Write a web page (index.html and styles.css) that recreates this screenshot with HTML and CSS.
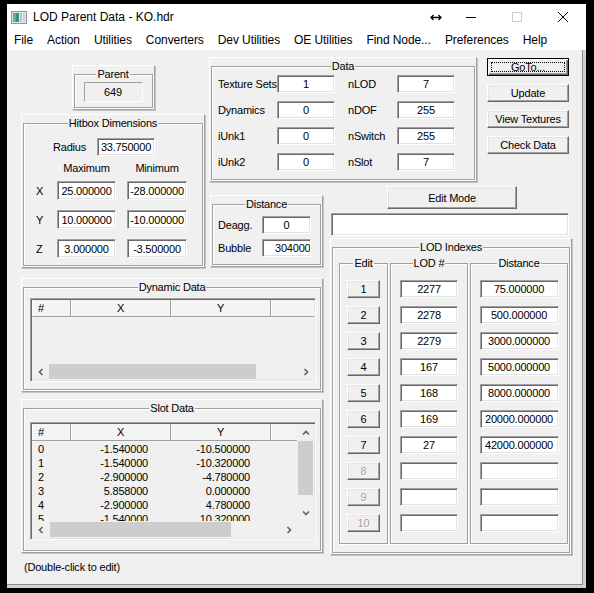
FILE: index.html
```html
<!DOCTYPE html>
<html lang="en">
<head>
    <meta charset="UTF-8">
    <meta name="viewport" content="width=device-width, initial-scale=1.0">
    <title>LOD Parent Data - KO.hdr</title>
    <link rel="stylesheet" href="styles.css">
</head>
<body>
    <div class="window">
        <div class="titlebar">
            <svg class="app-icon" width="16" height="13" viewBox="0 0 16 13">
                <rect x="0.5" y="0.5" width="15" height="12" fill="#e4e8ea" stroke="#8a969c"/>
                <rect x="2" y="2" width="6" height="9" fill="#3c8f7e"/>
                <rect x="2" y="2" width="3" height="9" fill="#5fae9a"/>
                <rect x="9" y="2" width="2" height="9" fill="#b9c3c8"/>
                <rect x="12" y="2" width="2" height="9" fill="#ccd4d8"/>
            </svg>
            <span class="title">LOD Parent Data - KO.hdr</span>
            <div class="caption">
                <span class="cap-extra">
                    <svg width="12" height="7" viewBox="0 0 12 7"><path d="M1 3.5h10M3.5 1L1 3.5 3.5 6M8.5 1L11 3.5 8.5 6" fill="none" stroke="#000" stroke-width="1.3"/></svg>
                </span>
                <span class="cap-btn">
                    <svg width="10" height="10" viewBox="0 0 10 10"><path d="M0 5.5h10" stroke="#000" stroke-width="1"/></svg>
                </span>
                <span class="cap-btn">
                    <svg width="10" height="10" viewBox="0 0 10 10"><rect x="0.5" y="0.5" width="9" height="9" fill="none" stroke="#cccccc"/></svg>
                </span>
                <span class="cap-btn">
                    <svg width="10" height="10" viewBox="0 0 10 10"><path d="M0 0L10 10M10 0L0 10" stroke="#000" stroke-width="1"/></svg>
                </span>
            </div>
        </div>

        <div class="menubar">
            <span>File</span>
            <span>Action</span>
            <span>Utilities</span>
            <span>Converters</span>
            <span>Dev Utilities</span>
            <span>OE Utilities</span>
            <span>Find Node...</span>
            <span>Preferences</span>
            <span>Help</span>
        </div>

        <div class="client">
            <div class="main">
                <div class="left-col">
                    <div class="top">
                        <div class="col-a">
                            <div class="panel parent-panel">
                                <fieldset class="group">
                                    <legend>Parent</legend>
                                    <div class="ro-box">649</div>
                                </fieldset>
                            </div>

                            <div class="panel hitbox-panel">
                                <fieldset class="group">
                                    <legend>Hitbox Dimensions</legend>
                                    <div class="radius-row">
                                        <span class="radius-label">Radius</span>
                                        <div class="field radius-field">33.750000</div>
                                    </div>
                                    <div class="dims-head">
                                        <span class="max-head">Maximum</span>
                                        <span class="min-head">Minimum</span>
                                    </div>
                                    <div class="dims">
                                        <span class="axis">X</span>
                                        <div class="field max-field">25.000000</div>
                                        <div class="field min-field">-28.000000</div>
                                        <span class="axis">Y</span>
                                        <div class="field max-field">10.000000</div>
                                        <div class="field min-field">-10.000000</div>
                                        <span class="axis">Z</span>
                                        <div class="field max-field">3.000000</div>
                                        <div class="field min-field">-3.500000</div>
                                    </div>
                                </fieldset>
                            </div>
                        </div>

                        <div class="col-b">
                            <div class="panel data-panel">
                                <fieldset class="group">
                                    <legend>Data</legend>
                                    <div class="data-grid">
                                        <span class="lbl">Texture Sets</span>
                                        <div class="field">1</div>
                                        <span class="lbl lbl2">nLOD</span>
                                        <div class="field">7</div>

                                        <span class="lbl">Dynamics</span>
                                        <div class="field">0</div>
                                        <span class="lbl lbl2">nDOF</span>
                                        <div class="field">255</div>

                                        <span class="lbl">iUnk1</span>
                                        <div class="field">0</div>
                                        <span class="lbl lbl2">nSwitch</span>
                                        <div class="field">255</div>

                                        <span class="lbl">iUnk2</span>
                                        <div class="field">0</div>
                                        <span class="lbl lbl2">nSlot</span>
                                        <div class="field">7</div>
                                    </div>
                                </fieldset>
                            </div>

                            <div class="panel distance-panel">
                                <fieldset class="group">
                                    <legend>Distance</legend>
                                    <div class="dist-grid">
                                        <span class="lbl">Deagg.</span>
                                        <div class="field">0</div>
                                        <span class="lbl">Bubble</span>
                                        <div class="field clipped">304000</div>
                                    </div>
                                </fieldset>
                            </div>
                        </div>
                    </div>

                    <div class="panel dynamic-panel">
                        <fieldset class="group">
                            <legend>Dynamic Data</legend>
                            <div class="listview dyn-list">
                                <div class="lv-head">
                                    <span class="hc hc-num">#</span>
                                    <span class="hc hc-val">X</span>
                                    <span class="hc hc-val">Y</span>
                                    <span class="hc hc-rest"></span>
                                </div>
                                <div class="lv-body"></div>
                                <div class="hscroll">
                                    <span class="arrow"><svg width="8" height="8" viewBox="0 0 8 8"><path d="M5.5 1L2.5 4l3 3" fill="none" stroke="#606060" stroke-width="1.6"/></svg></span>
                                    <div class="track"><div class="thumb dyn-thumb"></div></div>
                                    <span class="arrow"><svg width="8" height="8" viewBox="0 0 8 8"><path d="M2.5 1l3 3-3 3" fill="none" stroke="#606060" stroke-width="1.6"/></svg></span>
                                </div>
                            </div>
                        </fieldset>
                    </div>

                    <div class="panel slot-panel">
                        <fieldset class="group">
                            <legend>Slot Data</legend>
                            <div class="listview slot-list">
                                <div class="lv-main">
                                    <div class="lv-content">
                                        <div class="lv-head">
                                            <span class="hc hc-num">#</span>
                                            <span class="hc hc-val">X</span>
                                            <span class="hc hc-val">Y</span>
                                            <span class="hc hc-rest"></span>
                                        </div>
                                        <div class="lv-body">
                                            <div class="lv-row"><span class="c-num">0</span><span class="c-x">-1.540000</span><span class="c-y">-10.500000</span></div>
                                            <div class="lv-row"><span class="c-num">1</span><span class="c-x">-1.540000</span><span class="c-y">-10.320000</span></div>
                                            <div class="lv-row"><span class="c-num">2</span><span class="c-x">-2.900000</span><span class="c-y">-4.780000</span></div>
                                            <div class="lv-row"><span class="c-num">3</span><span class="c-x">5.858000</span><span class="c-y">0.000000</span></div>
                                            <div class="lv-row"><span class="c-num">4</span><span class="c-x">-2.900000</span><span class="c-y">4.780000</span></div>
                                            <div class="lv-row"><span class="c-num">5</span><span class="c-x">-1.540000</span><span class="c-y">10.320000</span></div>
                                        </div>
                                    </div>
                                    <div class="vscroll">
                                        <span class="arrow"><svg width="8" height="8" viewBox="0 0 8 8"><path d="M1 5.5l3-3 3 3" fill="none" stroke="#606060" stroke-width="1.6"/></svg></span>
                                        <div class="track"><div class="thumb slot-vthumb"></div></div>
                                        <span class="arrow"><svg width="8" height="8" viewBox="0 0 8 8"><path d="M1 2.5l3 3 3-3" fill="none" stroke="#606060" stroke-width="1.6"/></svg></span>
                                    </div>
                                </div>
                                <div class="lv-bottom">
                                    <div class="hscroll">
                                        <span class="arrow"><svg width="8" height="8" viewBox="0 0 8 8"><path d="M5.5 1L2.5 4l3 3" fill="none" stroke="#606060" stroke-width="1.6"/></svg></span>
                                        <div class="track"><div class="thumb slot-hthumb"></div></div>
                                        <span class="arrow"><svg width="8" height="8" viewBox="0 0 8 8"><path d="M2.5 1l3 3-3 3" fill="none" stroke="#606060" stroke-width="1.6"/></svg></span>
                                    </div>
                                    <span class="corner"></span>
                                </div>
                            </div>
                        </fieldset>
                    </div>
                </div>

                <div class="right-col">
                    <div class="btn-stack">
                        <button class="btn default">GoTo...</button>
                        <button class="btn">Update</button>
                        <button class="btn">View Textures</button>
                        <button class="btn">Check Data</button>
                    </div>

                    <button class="btn edit-mode">Edit Mode</button>
                    <div class="field status-field"></div>

                    <div class="panel lod-panel">
                        <fieldset class="group">
                            <legend>LOD Indexes</legend>
                            <div class="lod-cols">
                                <fieldset class="group sub edit-col">
                                    <legend>Edit</legend>
                                    <button class="btn small">1</button>
                                    <button class="btn small">2</button>
                                    <button class="btn small">3</button>
                                    <button class="btn small">4</button>
                                    <button class="btn small">5</button>
                                    <button class="btn small">6</button>
                                    <button class="btn small">7</button>
                                    <button class="btn small" disabled>8</button>
                                    <button class="btn small" disabled>9</button>
                                    <button class="btn small" disabled>10</button>
                                </fieldset>
                                <fieldset class="group sub lod-col">
                                    <legend>LOD #</legend>
                                    <div class="field">2277</div>
                                    <div class="field">2278</div>
                                    <div class="field">2279</div>
                                    <div class="field">167</div>
                                    <div class="field">168</div>
                                    <div class="field">169</div>
                                    <div class="field">27</div>
                                    <div class="field"></div>
                                    <div class="field"></div>
                                    <div class="field"></div>
                                </fieldset>
                                <fieldset class="group sub dist-col">
                                    <legend>Distance</legend>
                                    <div class="field">75.000000</div>
                                    <div class="field">500.000000</div>
                                    <div class="field">3000.000000</div>
                                    <div class="field">5000.000000</div>
                                    <div class="field">8000.000000</div>
                                    <div class="field">20000.000000</div>
                                    <div class="field">42000.000000</div>
                                    <div class="field"></div>
                                    <div class="field"></div>
                                    <div class="field"></div>
                                </fieldset>
                            </div>
                        </fieldset>
                    </div>
                </div>
            </div>

            <div class="hint">(Double-click to edit)</div>
        </div>
    </div>
</body>
</html>
```

FILE: styles.css
```css
* {
    box-sizing: border-box;
}

body {
    margin: 0;
    background: #000;
    font-family: 'Liberation Sans', Arial, sans-serif;
    font-size: 11px;
    letter-spacing: -0.2px;
    color: #000;
}

.window {
    margin: 4px 0 0 7px;
    width: 579px;
    height: 584px;
    background: #d2d2d2;
    display: flex;
    flex-direction: column;
}

/* title bar + menu */

.titlebar {
    height: 26px;
    background: #fff;
    display: flex;
    align-items: center;
    padding-left: 4px;
    font-size: 12px;
    letter-spacing: 0;
}

.app-icon {
    margin-right: 6px;
}

.title {
    flex: 1;
}

.caption {
    display: flex;
    align-items: center;
    height: 100%;
}

.cap-extra {
    width: 20px;
    display: flex;
    justify-content: center;
    margin-right: 2px;
}

.cap-btn {
    width: 46px;
    height: 100%;
    display: flex;
    align-items: center;
    justify-content: center;
}

.menubar {
    height: 20px;
    background: #fff;
    display: flex;
    font-size: 12px;
    letter-spacing: -0.08px;
    line-height: 20px;
}

.menubar span {
    padding: 0 7px;
}

/* client area */

.client {
    flex: 1;
    background: #f0f0f0;
    margin: 0 3px 3px 0;
    border-right: 1px solid #8c8c8c;
    border-bottom: 1px solid #8c8c8c;
    padding: 7px 0 0 14px;
}

.main {
    display: flex;
    align-items: flex-start;
    gap: 7px;
}

.left-col {
    width: 302px;
    display: flex;
    flex-direction: column;
}

.top {
    display: flex;
    gap: 4px;
}

.col-a {
    width: 184px;
    display: flex;
    flex-direction: column;
    align-items: center;
}

.col-b {
    width: 114px;
    display: flex;
    flex-direction: column;
}

/* 3d frames */

.panel {
    border: 1px solid;
    border-color: #fff #a0a0a0 #a0a0a0 #fff;
    box-shadow: 1px 1px 0 #c4c4c4;
    padding: 1px;
}

.group {
    margin: 0;
    padding: 0;
    min-width: 0;
    height: 100%;
    border: 1px solid #a0a0a0;
    box-shadow: inset 1px 1px 0 #fff, 1px 1px 0 #fff;
}

.group legend {
    margin: 0 auto;
    padding: 0 1px;
    line-height: 14px;
    background: #f0f0f0;
}

.field {
    height: 18px;
    background: #fff;
    border: 1px solid;
    border-color: #a0a0a0 #fff #fff #a0a0a0;
    box-shadow: inset 1px 1px 0 #696969, inset -1px -1px 0 #e3e3e3;
    text-align: center;
    line-height: 17px;
    white-space: nowrap;
    overflow: hidden;
}

.btn {
    font: inherit;
    letter-spacing: inherit;
    color: #000;
    padding: 0;
    background: #f0f0f0;
    border: 1px solid;
    border-color: #fff #696969 #696969 #fff;
    box-shadow: inset -1px -1px 0 #a0a0a0, inset 1px 1px 0 #e3e3e3;
    line-height: 14px;
    text-align: center;
}

.btn.default {
    border-color: #000;
    box-shadow: inset 1px 1px 0 #fff, inset -1px -1px 0 #696969, inset -2px -2px 0 #a0a0a0;
    outline: 1px dotted #000;
    outline-offset: -5px;
}

.btn:disabled {
    color: #a0a0a0;
    text-shadow: 1px 1px 0 #fff;
}

/* parent */

.parent-panel {
    width: 83px;
    height: 45px;
    margin-top: 8px;
}

.ro-box {
    width: 59px;
    height: 20px;
    margin: 1px auto 0;
    border: 1px solid;
    border-color: #a0a0a0 #fff #fff #a0a0a0;
    text-align: center;
    line-height: 18px;
}

/* hitbox */

.hitbox-panel {
    width: 184px;
    height: 154px;
    margin-top: 4px;
}

.radius-row {
    display: flex;
    align-items: center;
    margin-top: 8px;
    padding-left: 29px;
}

.radius-label {
    width: 44px;
}

.radius-field {
    width: 58px;
}

.dims-head {
    display: flex;
    margin-top: 5px;
    padding-left: 33px;
    line-height: 14px;
}

.max-head {
    width: 59px;
    text-align: center;
}

.min-head {
    width: 60px;
    margin-left: 11px;
    text-align: center;
}

.dims {
    display: grid;
    grid-template-columns: 33px 70px 60px;
    grid-auto-rows: 19px;
    row-gap: 10px;
    margin-top: 6px;
    align-items: center;
}

.axis {
    padding-left: 12px;
}

.dims .field {
    height: 19px;
    line-height: 18px;
}

.max-field {
    width: 59px;
}

/* data */

.data-panel {
    width: 268px;
    height: 125px;
}

.data-grid {
    display: grid;
    grid-template-columns: 59px 58px 62px 58px;
    grid-auto-rows: 18px;
    row-gap: 8px;
    margin: 2px 0 0 6px;
    align-items: center;
}

.lbl {
    white-space: nowrap;
}

.lbl2 {
    padding-left: 13px;
}

/* distance */

.distance-panel {
    width: 113px;
    height: 72px;
    margin: 13px 0 0 1px;
}

.dist-grid {
    display: grid;
    grid-template-columns: 44px 49px;
    grid-auto-rows: 18px;
    row-gap: 5px;
    margin: 5px 0 0 5px;
    align-items: center;
}

.field.clipped {
    text-align: left;
    padding-left: 12px;
}

/* list views */

.dynamic-panel {
    width: 302px;
    height: 114px;
    margin-top: 10px;
}

.slot-panel {
    width: 302px;
    height: 154px;
    margin-top: 7px;
}

.listview {
    width: 286px;
    margin-left: 6px;
    border: 1px solid;
    border-color: #a0a0a0 #fff #fff #a0a0a0;
    box-shadow: inset 1px 1px 0 #696969, inset -1px -1px 0 #e3e3e3;
    padding: 1px;
    display: flex;
    flex-direction: column;
}

.dyn-list {
    height: 84px;
    margin-top: 4px;
}

.slot-list {
    height: 118px;
    margin-top: 7px;
}

.lv-head {
    display: flex;
    height: 17px;
    line-height: 16px;
    border-bottom: 1px solid #a0a0a0;
    background: #f4f4f4;
}

.hc {
    border-right: 1px solid #a0a0a0;
    box-shadow: inset 1px 0 0 #fff;
    text-align: center;
}

.hc-num {
    width: 39px;
    text-align: left;
    padding-left: 6px;
}

.hc-val {
    width: 100px;
}

.hc-rest {
    flex: 1;
    border-right: none;
}

.lv-body {
    flex: 1;
    overflow: hidden;
}

.lv-main {
    flex: 1;
    display: flex;
    min-height: 0;
}

.lv-content {
    flex: 1;
    display: flex;
    flex-direction: column;
    min-width: 0;
}

.lv-row {
    display: flex;
    height: 14px;
    line-height: 14px;
}

.lv-row:first-child {
    margin-top: 1px;
}

.c-num {
    width: 39px;
    padding-left: 6px;
}

.c-x {
    width: 100px;
    text-align: right;
    padding-right: 23px;
}

.c-y {
    width: 100px;
    text-align: right;
    padding-right: 21px;
}

.lv-bottom {
    display: flex;
    height: 17px;
}

.lv-bottom .hscroll {
    flex: 1;
}

.corner {
    width: 17px;
}

/* scroll bars */

.hscroll {
    height: 17px;
    display: flex;
    background: #f0f0f0;
}

.vscroll {
    width: 17px;
    display: flex;
    flex-direction: column;
    background: #f0f0f0;
}

.arrow {
    width: 17px;
    height: 17px;
    display: flex;
    align-items: center;
    justify-content: center;
}

.track {
    flex: 1;
    display: flex;
}

.vscroll .track {
    flex-direction: column;
}

.thumb {
    background: #cdcdcd;
}

.hscroll .thumb {
    height: 15px;
    margin-top: 1px;
}

.vscroll .thumb {
    width: 15px;
    margin-left: 1px;
}

.dyn-thumb {
    width: 207px;
}

.slot-hthumb {
    width: 181px;
    margin-left: 1px;
}

.slot-vthumb {
    height: 54px;
}

/* right column */

.right-col {
    width: 242px;
    display: flex;
    flex-direction: column;
    align-items: flex-start;
}

.btn-stack {
    display: flex;
    flex-direction: column;
    gap: 8px;
    margin: 1px 0 0 157px;
}

.btn-stack .btn {
    width: 82px;
    height: 18px;
}

.edit-mode {
    width: 130px;
    height: 23px;
    margin: 32px 0 0 57px;
}

.status-field {
    width: 238px;
    height: 23px;
    margin: 4px 0 0 1px;
}

.lod-panel {
    width: 242px;
    height: 317px;
    margin-top: 2px;
}

.lod-cols {
    display: flex;
    gap: 2px;
    margin: 2px 0 0 6px;
    height: 288px;
}

.group.sub {
    height: 288px;
    display: flex;
    flex-direction: column;
    align-items: center;
    gap: 8px;
    padding-top: 10px;
}

.edit-col {
    width: 49px;
}

.lod-col {
    width: 78px;
}

.dist-col {
    width: 98px;
}

.btn.small {
    width: 33px;
    height: 18px;
    flex: none;
}

.lod-col .field {
    width: 58px;
    flex: none;
}

.dist-col .field {
    width: 79px;
    flex: none;
}

.hint {
    margin: 5px 0 0 3px;
    line-height: 14px;
}
```
